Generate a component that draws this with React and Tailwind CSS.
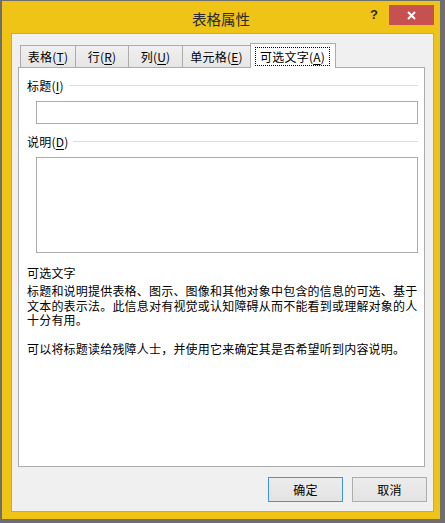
const tabs = [
  { label: '表格', key: 'T', w: 'w-[56px]' },
  { label: '行', key: 'R', w: 'w-[54px]' },
  { label: '列', key: 'U', w: 'w-[55px]' },
  { label: '单元格', key: 'E', w: 'w-[69px]' },
];

const Label = ({ text, k }) => (
  <span>
    {text}(<span className="underline underline-offset-2">{k}</span>)
  </span>
);

const App = () => {
  return (
    <div className="w-[445px] h-[523px] bg-[#6e6e6e] pl-[2px] pt-[1px] font-['Noto_Sans_CJK_SC','Noto_Sans',sans-serif] text-black">
      <div className="w-[438px] h-[518px] bg-[#efc416] flex flex-col">
        {/* title bar */}
        <div className="h-[32px] grid grid-cols-[1fr_auto_1fr]">
          <div />
          <div className="pt-[8px] text-[14.5px] leading-[20px] text-[#2b2b2b]">表格属性</div>
          <div className="flex justify-end items-start pt-[4px] pr-[6px]">
            <span className="mr-[11px] h-[20px] leading-[20px] text-[13px] font-bold text-[#2b2b2b] font-['Liberation_Sans',sans-serif]">
              ?
            </span>
            <button className="w-[45px] h-[20px] bg-[#c75050] flex items-center justify-center">
              <svg width="9" height="9" viewBox="0 0 9 9">
                <path d="M1 1L8 8M8 1L1 8" stroke="#fff" strokeWidth="2" />
              </svg>
            </button>
          </div>
        </div>

        <div className="flex-1 flex pl-[9px] pr-[6px] pb-[7px]">
          <div className="flex-1 flex flex-col border border-[#d6ae12] bg-[#f0f0f0] text-[12px] tracking-[0.2px]">
            {/* tabs */}
            <div className="flex items-end pl-[8px] pt-[9px]">
              {tabs.map((t, i) => (
                <div
                  key={t.key}
                  className={`${t.w} h-[22px] ${i > 0 ? '-ml-px' : ''} flex items-center justify-center border border-b-0 border-[#acacac] bg-gradient-to-b from-[#f0f0f0] to-[#e5e5e5] leading-[15px]`}
                >
                  <Label text={t.label} k={t.key} />
                </div>
              ))}
              <div className="-ml-px -mb-px w-[86px] h-[25px] relative z-10 bg-white border border-b-0 border-[#acacac] pl-[4px] pt-[3px]">
                <div className="w-[75px] h-[19px] border border-dotted border-black flex items-center justify-center leading-[15px]">
                  <Label text="可选文字" k="A" />
                </div>
              </div>
            </div>

            {/* panel */}
            <div className="ml-[6px] mr-[8px] h-[400px] border border-[#acacac] bg-white flex flex-col pl-[8px] pr-[6px] pt-[10px]">
              <div className="flex items-center h-[15px] leading-[15px]">
                <Label text="标题" k="I" />
                <div className="flex-1 h-px bg-[#dcdcdc] ml-[5px]" />
              </div>
              <div className="ml-[9px] mt-[8px] h-[23px] border border-[#ababab] bg-white" />

              <div className="flex items-center h-[15px] leading-[15px] mt-[10px]">
                <Label text="说明" k="D" />
                <div className="flex-1 h-px bg-[#dcdcdc] ml-[5px]" />
              </div>
              <div className="ml-[9px] mt-[8px] h-[96px] border border-[#ababab] bg-white" />

              <div className="mt-[12px] leading-[15px]">可选文字</div>
              <p className="mt-[4px] leading-[14.5px] whitespace-nowrap">
                标题和说明提供表格、图示、图像和其他对象中包含的信息的可选、基于
                <br />
                文本的表示法。此信息对有视觉或认知障碍从而不能看到或理解对象的人
                <br />
                十分有用。
              </p>
              <p className="mt-[14px] leading-[14.5px]">
                可以将标题读给残障人士，并使用它来确定其是否希望听到内容说明。
              </p>
            </div>

            {/* buttons */}
            <div className="flex justify-end gap-[9px] mt-[10px] pr-[6px]">
              <button className="w-[75px] h-[25px] border border-[#3d94e3] bg-gradient-to-b from-[#ececec] to-[#e3e3e3] leading-[15px]">
                确定
              </button>
              <button className="w-[75px] h-[25px] border border-[#adadad] bg-gradient-to-b from-[#ececec] to-[#e3e3e3] leading-[15px]">
                取消
              </button>
            </div>
          </div>
        </div>
      </div>
    </div>
  );
};

export default App;
